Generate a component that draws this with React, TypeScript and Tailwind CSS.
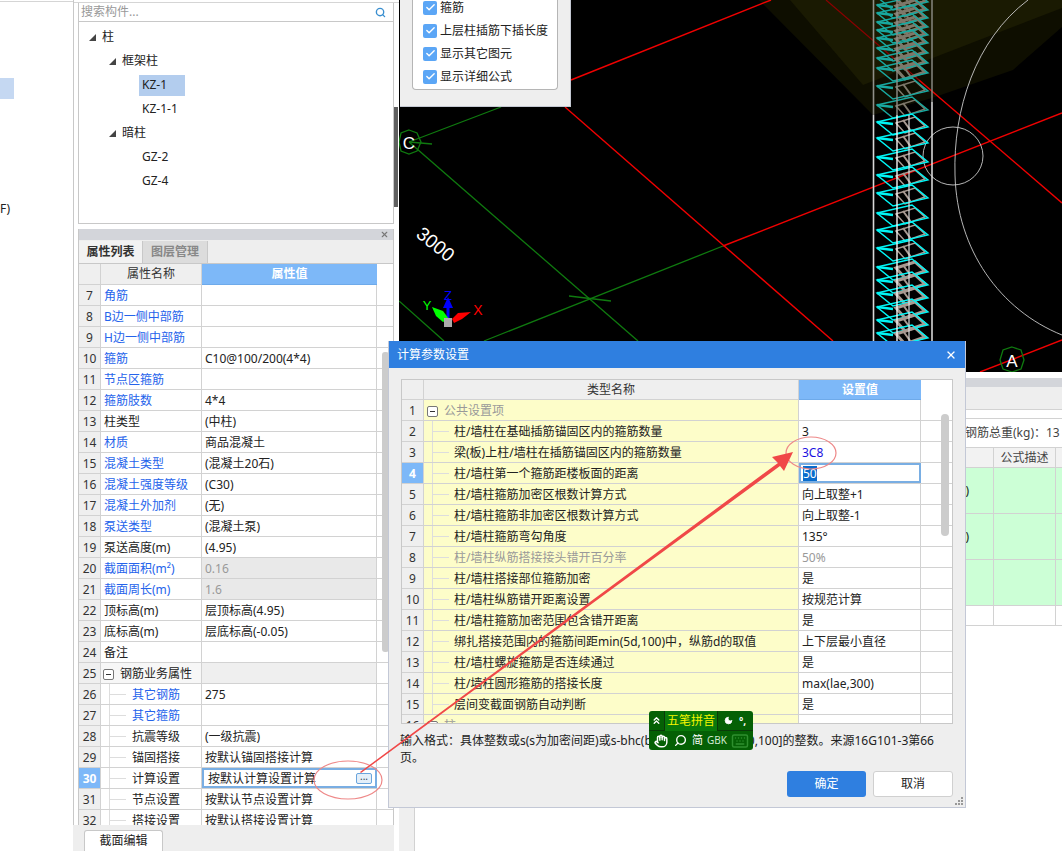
import React from "react";
import { Hand, Search, Moon, Keyboard, X, Check, ChevronsUp } from "lucide-react";

const B = "text-[#2563eb]";
type P = { n: number; name: string; val?: string; blue?: boolean; gray?: boolean; sub?: boolean; group?: boolean; sel?: boolean };
const props: P[] = [
  { n: 7, name: "角筋", blue: true },
  { n: 8, name: "B边一侧中部筋", blue: true },
  { n: 9, name: "H边一侧中部筋", blue: true },
  { n: 10, name: "箍筋", blue: true, val: "C10@100/200(4*4)" },
  { n: 11, name: "节点区箍筋", blue: true },
  { n: 12, name: "箍筋肢数", blue: true, val: "4*4" },
  { n: 13, name: "柱类型", val: "(中柱)" },
  { n: 14, name: "材质", blue: true, val: "商品混凝土" },
  { n: 15, name: "混凝土类型", blue: true, val: "(混凝土20石)" },
  { n: 16, name: "混凝土强度等级", blue: true, val: "(C30)" },
  { n: 17, name: "混凝土外加剂", blue: true, val: "(无)" },
  { n: 18, name: "泵送类型", blue: true, val: "(混凝土泵)" },
  { n: 19, name: "泵送高度(m)", val: "(4.95)" },
  { n: 20, name: "截面面积(m²)", blue: true, val: "0.16", gray: true },
  { n: 21, name: "截面周长(m)", blue: true, val: "1.6", gray: true },
  { n: 22, name: "顶标高(m)", val: "层顶标高(4.95)" },
  { n: 23, name: "底标高(m)", val: "层底标高(-0.05)" },
  { n: 24, name: "备注" },
  { n: 25, name: "钢筋业务属性", group: true },
  { n: 26, name: "其它钢筋", blue: true, sub: true, val: "275" },
  { n: 27, name: "其它箍筋", blue: true, sub: true },
  { n: 28, name: "抗震等级", sub: true, val: "(一级抗震)" },
  { n: 29, name: "锚固搭接", sub: true, val: "按默认锚固搭接计算" },
  { n: 30, name: "计算设置", sub: true, val: "按默认计算设置计算", sel: true },
  { n: 31, name: "节点设置", sub: true, val: "按默认节点设置计算" },
  { n: 32, name: "搭接设置", sub: true, val: "按默认搭接设置计算" },
];

type D = { n: number; name: string; val?: string; kind?: "blue" | "gray" | "sel"; group?: boolean; grayName?: boolean };
const params: D[] = [
  { n: 1, name: "公共设置项", group: true, grayName: true },
  { n: 2, name: "柱/墙柱在基础插筋锚固区内的箍筋数量", val: "3" },
  { n: 3, name: "梁(板)上柱/墙柱在插筋锚固区内的箍筋数量", val: "3C8", kind: "blue" },
  { n: 4, name: "柱/墙柱第一个箍筋距楼板面的距离", val: "50", kind: "sel" },
  { n: 5, name: "柱/墙柱箍筋加密区根数计算方式", val: "向上取整+1" },
  { n: 6, name: "柱/墙柱箍筋非加密区根数计算方式", val: "向上取整-1" },
  { n: 7, name: "柱/墙柱箍筋弯勾角度", val: "135°" },
  { n: 8, name: "柱/墙柱纵筋搭接接头错开百分率", val: "50%", kind: "gray", grayName: true },
  { n: 9, name: "柱/墙柱搭接部位箍筋加密", val: "是" },
  { n: 10, name: "柱/墙柱纵筋错开距离设置", val: "按规范计算" },
  { n: 11, name: "柱/墙柱箍筋加密范围包含错开距离", val: "是" },
  { n: 12, name: "绑扎搭接范围内的箍筋间距min(5d,100)中，纵筋d的取值", val: "上下层最小直径" },
  { n: 13, name: "柱/墙柱螺旋箍筋是否连续通过", val: "是" },
  { n: 14, name: "柱/墙柱圆形箍筋的搭接长度", val: "max(lae,300)" },
  { n: 15, name: "层间变截面钢筋自动判断", val: "是" },
  { n: 16, name: "柱", group: true, grayName: true },
];

function Minus() {
  return (
    <span className="flex h-[11px] w-[11px] shrink-0 items-center justify-center rounded-[2px] border border-[#777] bg-white">
      <span className="h-px w-[5px] bg-[#333]" />
    </span>
  );
}

function Tri() {
  return (
    <svg width="7" height="7" viewBox="0 0 7 7" className="shrink-0">
      <path d="M7 0V7H0Z" fill="#444" />
    </svg>
  );
}

function TreeRow({ label, pad, tri, sel }: { label: string; pad: string; tri?: boolean; sel?: boolean }) {
  return (
    <div className={`flex h-[24px] items-center ${pad}`}>
      {tri && <Tri />}
      <span className={`${tri ? "ml-[3px]" : ""} flex h-[21px] items-center ${sel ? "w-[46px] bg-[#b3cdee] pl-[3px]" : "pl-[3px]"}`}>{label}</span>
    </div>
  );
}

function PropRow({ p }: { p: P }) {
  return (
    <div className="flex h-[21px] shrink-0 border-b border-[#d2d2d2]">
      <div className={`flex w-[22px] shrink-0 items-center justify-center border-r border-[#d2d2d2] pt-[2px] ${p.sel ? "bg-[#7db8f8] font-bold text-white" : "bg-[#efefef] text-[#333]"}`}>{p.n}</div>
      <div className={`relative flex w-[101px] shrink-0 items-center border-r border-[#d2d2d2] pt-[2px] ${p.group ? "bg-[#f7f7f7]" : ""} ${p.blue ? B : "text-[#222]"} ${p.sub ? "pl-[31px]" : p.group ? "pl-[2px]" : "pl-[3px]"}`}>
        {p.sub && (
          <>
            <span className="absolute left-[8px] top-0 h-full border-l border-[#ddd]" />
            <span className="absolute left-[9px] top-[10px] w-[16px] border-t border-[#ddd]" />
          </>
        )}
        {p.group ? (
          <>
            <Minus />
            <span className="ml-[6px] whitespace-nowrap">{p.name}</span>
          </>
        ) : (
          <span className="whitespace-nowrap">{p.name}</span>
        )}
      </div>
      {p.sel ? (
        <div className="flex w-[175px] shrink-0 items-center justify-between border-2 border-[#79aee3] bg-white pl-[4px] pr-[3px] text-[#222]">
          <span className="pt-px">{p.val}</span>
          <span className="flex h-[11px] w-[16px] items-center justify-center rounded-[2px] border border-[#6aa5dd] bg-[#e4eff9] pb-[5px] text-[10px] leading-none text-[#345]">...</span>
        </div>
      ) : (
        <div className={`flex w-[175px] shrink-0 items-center border-r border-[#d2d2d2] pl-[3px] pt-[2px] ${p.gray ? "bg-[#e9e9e9] text-[#999]" : p.group ? "bg-[#efefef]" : "text-[#222]"}`}>{p.val}</div>
      )}
    </div>
  );
}

function ParamRow({ d }: { d: D }) {
  const sel = d.kind === "sel";
  return (
    <div className="flex h-[21px] shrink-0 border-b border-[#d2d2d2]">
      <div className={`flex w-[22px] shrink-0 items-center justify-center border-r border-[#d2d2d2] pt-[2px] ${d.n === 4 ? "bg-[#7db8f8] font-bold text-white" : "bg-[#efefef] text-[#333]"}`}>{d.n}</div>
      <div className={`relative flex w-[375px] shrink-0 items-center border-r border-[#d2d2d2] bg-[#fdfdc9] pt-[2px] ${d.grayName ? "text-[#999]" : "text-[#222]"} ${d.group ? "pl-[3px]" : "pl-[30px]"}`}>
        {!d.group && (
          <>
            <span className="absolute left-[8px] top-0 h-full border-l border-[#ddd]" />
            <span className="absolute left-[9px] top-[10px] w-[16px] border-t border-[#ddd]" />
          </>
        )}
        {d.group && <Minus />}
        <span className={`whitespace-nowrap ${d.group ? "ml-[6px]" : ""}`}>{d.name}</span>
      </div>
      {sel ? (
        <div className="flex w-[122px] shrink-0 items-center border-2 border-[#79aee3] bg-white pl-[2px] text-white">
          <span className="bg-[#0a6ccc] leading-[15px]">{d.val}</span>
        </div>
      ) : (
        <div className={`flex w-[122px] shrink-0 items-center border-r border-[#d2d2d2] bg-white pl-[3px] pt-[2px] ${d.kind === "blue" ? "text-[#1a10e0]" : d.kind === "gray" ? "text-[#999]" : "text-[#222]"}`}>{d.val}</div>
      )}
    </div>
  );
}

const topYs = [-3, 5, 13, 22, 30, 38, 48, 58, 68, 86, 105];
const midYs = [122, 138, 157, 175, 193, 213, 230, 248, 267, 280, 293, 307, 320, 333];

function Hoop({ y, teal }: { y: number; teal?: boolean }) {
  const c = teal ? "#18a9a0" : "#00f6f6";
  const t = teal ? "#7d786a" : "#a89a92";
  const dense = y > 255 || y < 70;
  return (
    <g fill="none">
      <polygon points={`896,${y + 1} 915,${y - 5} 925,${y + 4} 905,${y + 11}`} stroke={t} strokeWidth={dense ? 3 : 1.5} />
      <line x1="903" y1={y - 2} x2="911" y2={y + 9} stroke={t} strokeWidth={2} />
      <polygon points={`877,${y} 912,${y - 8} 928,${y + 5} 893,${y + 13}`} stroke={c} strokeWidth="1.4" />
      <line x1="877" y1={y} x2="893" y2={y + 2} stroke={c} strokeWidth="2.4" />
    </g>
  );
}

function Cad() {
  return (
    <svg viewBox="399 0 663 372" width="663" height="372" className="block">
      <rect x="399" y="0" width="663" height="372" fill="#000" />
      <polygon points="759,0 873,115 932,98 1013,70 1062,27 1062,0" fill="#0e0e00" />
      <polygon points="790,0 863,85 1062,8 1062,0" fill="#1a1a02" />
      <g fill="none" stroke="#f00000" strokeWidth="1.4">
        <line x1="771" y1="0" x2="571" y2="80" />
        <line x1="565" y1="107" x2="833" y2="341" />
        <line x1="723" y1="246" x2="1062" y2="113" />
        <line x1="919" y1="80" x2="1062" y2="203" />
        <line x1="980" y1="372" x2="1062" y2="340" />
      </g>
      <line x1="826" y1="0" x2="919" y2="80" stroke="#8a0000" strokeWidth="1.2" />
      <g fill="none" stroke="#0f7a0f" strokeWidth="1.3">
        <line x1="409" y1="142" x2="501" y2="107" />
        <line x1="409" y1="142" x2="638" y2="341" />
        <line x1="723" y1="246" x2="484" y2="341" />
        <line x1="569" y1="296" x2="611" y2="301" />
        <line x1="399" y1="301" x2="444" y2="341" />
        <line x1="409" y1="142" x2="432" y2="144" />
        <polygon points="409,130 417,133 421,142 417,151 409,154 401,151 399,142 401,133" />
        <polygon points="1012,347 1021,350 1024,360 1021,369 1012,372 1003,369 1000,360 1003,350" />
      </g>
      <path d="M1028 0C975 40 953 110 955 175C957 250 1000 310 1062 335" fill="none" stroke="#c9c9c9" strokeWidth="0.9" />
      <ellipse cx="953" cy="156" rx="30" ry="29" fill="none" stroke="#c9c9c9" strokeWidth="0.9" />
      {topYs.map((y) => <Hoop key={y} y={y} teal />)}
      {midYs.map((y) => <Hoop key={y} y={y} />)}
      <line x1="909" y1="115" x2="909" y2="341" stroke="#dddddd" strokeWidth="1.2" />
      <line x1="873.5" y1="0" x2="873.5" y2="115" stroke="#8f8f88" strokeWidth="1.6" />
      <line x1="873.5" y1="115" x2="873.5" y2="341" stroke="#d8d8d8" strokeWidth="1.6" />
      <line x1="897" y1="0" x2="897" y2="115" stroke="#8f8f88" strokeWidth="1.4" />
      <line x1="897" y1="115" x2="897" y2="341" stroke="#f4f4f4" strokeWidth="1.4" />
      <line x1="932" y1="0" x2="932" y2="102" stroke="#8f8f88" strokeWidth="1.4" />
      <line x1="932" y1="102" x2="932" y2="341" stroke="#f4f4f4" strokeWidth="1.4" />
      <text x="409" y="149" fill="#fff" fontSize="17" textAnchor="middle" fontFamily="Liberation Sans, sans-serif">C</text>
      <text x="1012" y="367" fill="#fff" fontSize="17" textAnchor="middle" fontFamily="Liberation Sans, sans-serif">A</text>
      <text x="0" y="0" fill="#fff" fontSize="19" fontFamily="Liberation Sans, sans-serif" transform="translate(415 236) rotate(39)">3000</text>
      <line x1="448" y1="320" x2="448" y2="304" stroke="#0000ff" strokeWidth="3" />
      <polygon points="448,297 443,308 453,308" fill="#0000ff" />
      <polygon points="432,307 443,311 449,319 443,322 436,316" fill="#00ff00" />
      <polygon points="471,312 458,313 452,319 454,323 462,319" fill="#ff0000" />
      <rect x="444" y="318" width="8" height="9" fill="#aaa" />
      <text x="448" y="300" fill="#0000ff" fontSize="13" textAnchor="middle" fontFamily="Liberation Sans, sans-serif">Z</text>
      <text x="427" y="310" fill="#00ff00" fontSize="13" textAnchor="middle" fontFamily="Liberation Sans, sans-serif">Y</text>
      <text x="478" y="315" fill="#ff0000" fontSize="14" textAnchor="middle" fontFamily="Liberation Sans, sans-serif">X</text>
    </svg>
  );
}

function Chk({ label }: { label: string }) {
  return (
    <div className="flex h-[23px] items-center">
      <span className="flex h-[14px] w-[14px] items-center justify-center rounded-[2px] bg-[#5ba6f6]">
        <Check size={11} strokeWidth={3} color="#fff" />
      </span>
      <span className="ml-[3px] whitespace-nowrap text-[#222]">{label}</span>
    </div>
  );
}

function RightRow({ h, green, children }: { h: string; green?: boolean; children?: React.ReactNode }) {
  return (
    <div className={`flex ${h} shrink-0 border-b border-[#d2d2d2] ${green ? "bg-[#ccffd6]" : "bg-white"}`}>
      <div className="w-[16px] shrink-0 border-r border-[#d2d2d2] bg-[#efefef]" />
      <div className="flex w-[579px] shrink-0 items-center justify-end border-r border-[#d2d2d2] pr-[24px]">{children}</div>
      <div className="w-[62px] shrink-0 border-r border-[#d2d2d2]" />
    </div>
  );
}

export default function App() {
  return (
    <div className="relative flex h-[851px] w-[1062px] overflow-hidden bg-white font-['Noto_Sans','Noto_Sans_CJK_SC',sans-serif] text-[12px] text-[#222]">
      {/* left strip */}
      <div className="flex w-[74px] shrink-0 flex-col border-r border-[#c8c8c8]">
        <div className="h-[2px] border-b border-[#d5d5d5]" />
        <div className="mt-[76px] h-[21px] w-[14px] bg-[#c5d8f2]" />
        <div className="mt-[101px] leading-[18px] text-[#222]">F)</div>
      </div>

      {/* middle */}
      <div className="relative flex w-[325px] shrink-0 flex-col">
        <div className="h-[3px] shrink-0 border-b border-[#d5d5d5]" />
        <div className="ml-[4px] mr-[5px] flex flex-col border-x border-[#c8c8c8]">
          <div className="flex h-[19px] items-center justify-between border-b border-[#c8c8c8] pl-[2px] pr-[7px] text-[#999]">
            <span>搜索构件...</span>
            <Search size={11} strokeWidth={3} color="#3a8fd0" />
          </div>
          <div className="flex h-[202px] flex-col border-b border-[#c8c8c8] pt-[3px]">
            <TreeRow label="柱" pad="pl-[10px]" tri />
            <TreeRow label="框架柱" pad="pl-[30px]" tri />
            <TreeRow label="KZ-1" pad="pl-[60px]" sel />
            <TreeRow label="KZ-1-1" pad="pl-[60px]" />
            <TreeRow label="暗柱" pad="pl-[30px]" tri />
            <TreeRow label="GZ-2" pad="pl-[60px]" />
            <TreeRow label="GZ-4" pad="pl-[60px]" />
          </div>
        </div>
        <div className="ml-[4px] mr-[5px] mt-[5px] flex h-[596px] flex-col border-x border-[#c8c8c8] bg-white">
          <div className="flex h-[11px] shrink-0 items-center justify-end bg-[#d3d5da] pr-[4px]">
            <X size={9} strokeWidth={3} color="#777" />
          </div>
          <div className="flex h-[24px] shrink-0 border-b border-[#c8c8c8] bg-[#eeeeee] pt-px">
            <div className="flex w-[64px] items-center justify-center border-r border-[#c8c8c8] bg-[#f2f2f2] font-bold text-[#333]">属性列表</div>
            <div className="flex w-[65px] items-center justify-center border-r border-[#c8c8c8] bg-[#dcdcdc] font-bold text-[#888]">图层管理</div>
          </div>
          <div className="flex h-[21px] shrink-0">
            <div className="w-[22px] border-r border-b border-[#d2d2d2] bg-[#efefef]" />
            <div className="flex w-[101px] items-center justify-center border-r border-b border-[#d2d2d2] bg-[#efefef] text-[#333]">属性名称</div>
            <div className="flex w-[175px] items-center justify-center border-b border-[#6eaaea] bg-[#7db8f8] font-bold text-white">属性值</div>
          </div>
          <div className="relative flex flex-1 flex-col overflow-hidden">
            {props.map((p) => <PropRow key={p.n} p={p} />)}
            <div className="absolute left-[303px] top-[67px] h-[300px] w-[7px] rounded-[3px] bg-[#cccccc]" />
          </div>
        </div>
        <div className="ml-[-1px] mr-[5px] flex flex-1 items-end bg-[#eeeeee] pl-[11px]">
          <div className="flex h-[21px] w-[79px] items-center justify-center rounded-t-[3px] border border-b-0 border-[#c8c8c8] bg-white text-[#222]">截面编辑</div>
        </div>
        <div className="absolute left-[320px] top-[107px] flex h-[100px] w-[4px] items-center bg-[#606060]" />
      </div>

      {/* right */}
      <div className="flex min-w-0 flex-1 flex-col">
        <div className="relative h-[372px] shrink-0">
          <Cad />
          <div className="absolute left-px top-0 h-[107px] w-[171px] border-b border-r border-[#c4c8d2] bg-[#eeeeee] pl-[12px] pr-[12px]">
            <div className="h-[94px] rounded-b-[4px] border-x border-b border-[#b5b5b5] bg-white pl-[10px]">
              <div className="-mt-[4px]">
                <Chk label="箍筋" />
                <Chk label="上层柱插筋下插长度" />
                <Chk label="显示其它图元" />
                <Chk label="显示详细公式" />
              </div>
            </div>
          </div>
        </div>
        <div className="h-[6px] shrink-0" />
        <div className="h-[9px] shrink-0 bg-[#d3d5da]" />
        <div className="h-[23px] shrink-0 border-b border-[#d2d2d2] bg-[#eeeeee]" />
        <div className="h-[9px] shrink-0 border-b border-[#d2d2d2]" />
        <div className="flex h-[29px] shrink-0 items-center justify-end whitespace-nowrap border-b border-[#d2d2d2] text-[#444]">
          <span className="w-[97px] overflow-hidden">钢筋总重(kg)：13</span>
        </div>
        <div className="flex h-[20px] shrink-0 border-b border-[#d2d2d2] bg-[#f2f2f2]">
          <div className="w-[16px] border-r border-[#d2d2d2]" />
          <div className="w-[579px] border-r border-[#d2d2d2]" />
          <div className="flex w-[62px] items-center justify-center border-r border-[#d2d2d2] text-[#444]">公式描述</div>
        </div>
        <RightRow h="h-[46px]" green>
          <span>)</span>
        </RightRow>
        <RightRow h="h-[46px]" green>
          <span>)</span>
        </RightRow>
        <RightRow h="h-[46px]" green />
        <RightRow h="h-[20px]" />
        <div className="flex-1">
          <div className="h-full w-[16px] border-r border-[#d2d2d2] bg-[#efefef]" />
        </div>
      </div>

      {/* dialog */}
      <div className="absolute left-[388px] top-[341px] flex h-[467px] w-[578px] flex-col border border-t-0 border-[#c3c8d6] bg-[#eeeeee]">
        <div className="flex h-[27px] shrink-0 items-center justify-between bg-[#2f7fe0] pl-[8px] pr-[8px] text-white">
          <span>计算参数设置</span>
          <X size={12} strokeWidth={2.5} color="#fff" />
        </div>
        <div className="ml-[12px] mt-[11px] flex h-[345px] w-[552px] shrink-0 flex-col overflow-hidden border border-[#c8c8c8] bg-white">
          <div className="flex h-[20px] shrink-0">
            <div className="w-[22px] border-r border-b border-[#d2d2d2] bg-[#efefef]" />
            <div className="flex w-[375px] items-center justify-center border-r border-b border-[#d2d2d2] bg-[#efefef] text-[#333]">类型名称</div>
            <div className="flex w-[122px] items-center justify-center border-b border-[#6eaaea] bg-[#7db8f8] font-bold text-white">设置值</div>
          </div>
          <div className="relative flex-1 overflow-hidden">
            {params.map((d) => <ParamRow key={d.n} d={d} />)}
            <div className="absolute left-[539px] top-[14px] h-[122px] w-[8px] rounded-[4px] bg-[#cccccc]" />
          </div>
        </div>
        <div className="ml-[11px] mr-[8px] mt-[8px] leading-[17px] text-[#222]">
          输入格式：具体整数或s(s为加密间距)或s-bhc(bhc为取值范围在[50,100]的整数。来源16G101-3第66
          <br />
          页。
        </div>
        <div className="mt-[5px] flex justify-end gap-[7px] pr-[12px]">
          <div className="flex h-[26px] w-[79px] items-center justify-center rounded-[3px] bg-[#2f7fe0] text-white">确定</div>
          <div className="flex h-[26px] w-[80px] items-center justify-center rounded-[3px] border border-[#d0d0d0] bg-white text-[#222]">取消</div>
        </div>
        <div className="absolute bottom-[2px] right-[2px] grid grid-cols-3 gap-px">
          <span />
          <span />
          <span className="h-[2px] w-[2px] bg-[#999]" />
          <span />
          <span className="h-[2px] w-[2px] bg-[#999]" />
          <span className="h-[2px] w-[2px] bg-[#999]" />
          <span className="h-[2px] w-[2px] bg-[#999]" />
          <span className="h-[2px] w-[2px] bg-[#999]" />
          <span className="h-[2px] w-[2px] bg-[#999]" />
        </div>
      </div>

      {/* annotation */}
      <svg viewBox="0 0 1062 851" className="pointer-events-none absolute left-0 top-0 h-[851px] w-[1062px]">
        <ellipse cx="348" cy="780" rx="34" ry="19" fill="none" stroke="#e88" strokeWidth="1.2" />
        <ellipse cx="811" cy="453" rx="25" ry="16" fill="none" stroke="#e88" strokeWidth="1.2" />
        <polygon points="360,772 778,463 772,457 793,452 784,471 780,466 361,773" fill="#f04848" />
      </svg>

      {/* IME bar */}
      <div className="absolute left-[649px] top-[711px] flex h-[39px] w-[104px] flex-col rounded-[3px] bg-[#056005] text-white">
        <div className="flex h-[20px] items-center border-b border-[#0a3a0a]">
          <span className="flex w-[15px] justify-center"><ChevronsUp size={11} strokeWidth={3} color="#fff" /></span>
          <span className="flex h-[20px] w-[54px] items-center justify-center border-x border-[#0a3a0a] bg-[#0a7a0a] text-[#f5f500]">五笔拼音</span>
          <span className="ml-[6px] flex items-center gap-[6px]">
            <Moon size={9} fill="#fff" color="#fff" />
            <span className="text-[10px] font-bold leading-none">°,</span>
          </span>
        </div>
        <div className="flex h-[19px] items-center pl-[5px]">
          <Hand size={14} strokeWidth={2.5} color="#fff" />
          <Search size={13} strokeWidth={2.5} color="#fff" className="ml-[6px] -scale-x-100" />
          <span className="ml-[5px] text-[11px]">简</span>
          <span className="ml-[4px] text-[10px] text-[#d0e8d0]">GBK</span>
          <Keyboard size={18} color="#2f8f2f" className="ml-[4px]" />
        </div>
      </div>
    </div>
  );
}
